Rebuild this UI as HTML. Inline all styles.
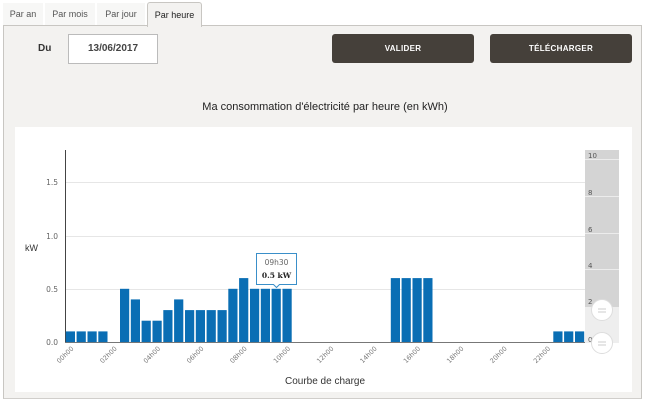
<!DOCTYPE html>
<html><head><meta charset="utf-8"><style>
body{margin:0;width:650px;height:406px;background:#fff;font-family:"Liberation Sans","DejaVu Sans",sans-serif;position:relative;overflow:hidden}
.tab{position:absolute;top:3px;height:22px;font-size:9px;color:#555;line-height:22px;text-align:center;background:#f7f7f6}
.panel{position:absolute;left:3px;top:25px;width:637px;height:372px;background:#f3f2f0;border:1px solid #c8c6c2;border-bottom:1px solid #d0cecb}
.btn{position:absolute;top:34px;width:142px;height:29px;background:#45403a;border-radius:3px;color:#fff;font-size:8px;font-weight:bold;text-align:center;line-height:29px;letter-spacing:.3px}
</style></head><body>
<div class="panel"></div>
<div class="tab" style="left:3px;width:40px">Par an</div>
<div class="tab" style="left:45px;width:50px">Par mois</div>
<div class="tab" style="left:97px;width:48px">Par jour</div>
<div class="tab" style="left:147px;width:53px;top:2px;height:24px;background:#f3f2f0;border:1px solid #c8c6c2;border-bottom:none;border-radius:3px 3px 0 0;color:#222;line-height:24px">Par heure</div>
<div style="position:absolute;left:38px;top:43px;font-size:10px;font-weight:bold;color:#333">Du</div>
<div style="position:absolute;left:68px;top:34px;width:88px;height:28px;background:#fff;border:1px solid #bbb;font-size:10px;font-weight:bold;color:#444;text-align:center;line-height:28px">13/06/2017</div>
<div class="btn" style="left:332px">VALIDER</div>
<div class="btn" style="left:490px">TÉLÉCHARGER</div>
<div style="position:absolute;left:0;width:650px;top:101px;text-align:center;font-size:11px;color:#222">Ma consommation d'électricité par heure (en kWh)</div>
<div style="position:absolute;left:15px;top:127px;width:617px;height:265px;background:#fff"></div>
<svg style="position:absolute;left:0;top:0" width="650" height="406" font-family="DejaVu Sans,Verdana,sans-serif">
<g stroke="#e6e6e6" stroke-width="1">
<line x1="65" y1="182.5" x2="585" y2="182.5"/><line x1="65" y1="236.5" x2="585" y2="236.5"/><line x1="65" y1="289.5" x2="585" y2="289.5"/>
</g>
<line x1="65.5" y1="150" x2="65.5" y2="342" stroke="#444"/>
<line x1="65" y1="342.5" x2="585" y2="342.5" stroke="#777"/>
<g font-size="7.5" fill="#666" text-anchor="end">
<text x="58" y="345">0.0</text><text x="58" y="292">0.5</text><text x="58" y="239">1.0</text><text x="58" y="185">1.5</text>
</g>
<text x="25" y="251" font-size="9" fill="#333" font-family="Liberation Sans,sans-serif">kW</text>
<g fill="#0a6eb4" id="bars"></g>
<g font-size="6.5" fill="#777" text-anchor="end" id="xl"></g>
<rect x="585" y="150" width="34" height="193" fill="#eeeeee"/>
<rect x="585" y="150" width="34" height="157" fill="#d4d4d4"/>
<g stroke="#ececec"><line x1="585" y1="159.5" x2="619" y2="159.5"/><line x1="585" y1="196.5" x2="619" y2="196.5"/><line x1="585" y1="233.5" x2="619" y2="233.5"/><line x1="585" y1="269.5" x2="619" y2="269.5"/></g>
<g font-size="7" fill="#555"><text x="588" y="158">10</text><text x="588" y="195">8</text><text x="588" y="232">6</text><text x="588" y="268">4</text><text x="588" y="304">2</text><text x="588" y="342">0</text></g>
<g fill="#fff" stroke="#ddd"><circle cx="602" cy="310" r="10.5"/><circle cx="602" cy="343" r="10.5"/></g>
<g stroke="#ccc"><line x1="598" y1="309" x2="606" y2="309"/><line x1="598" y1="312" x2="606" y2="312"/><line x1="598" y1="342" x2="606" y2="342"/><line x1="598" y1="345" x2="606" y2="345"/></g>
<path d="M256.5 253.5h40v31h-17l-3 3-3-3h-17z" fill="#fff" stroke="#3a8fc9"/>
<text x="276.5" y="265" font-size="7.5" fill="#666" text-anchor="middle">09h30</text>
<text x="276.5" y="278" font-size="7.5" fill="#222" font-weight="bold" text-anchor="middle" font-family="DejaVu Serif,serif">0.5 kW</text>
<text x="325" y="384" font-size="10" fill="#333" text-anchor="middle" font-family="Liberation Sans,sans-serif">Courbe de charge</text>
</svg>
<script>
var v=[.1,.1,.1,.1,0,.5,.4,.2,.2,.3,.4,.3,.3,.3,.3,.5,.6,.5,.5,.5,.5,0,0,0,0,0,0,0,0,0,.6,.6,.6,.6,0,0,0,0,0,0,0,0,0,0,0,.1,.1,.1];
var w=520/48,s='',l='';
v.forEach(function(x,i){if(x>0){var h=x*106.5;s+='<rect x="'+(65+i*w+0.8).toFixed(1)+'" y="'+(342-h).toFixed(1)+'" width="'+(w-1.6).toFixed(1)+'" height="'+h.toFixed(1)+'"/>';}});
for(var k=0;k<12;k++){var x=65+k*4*w+9;var t=(k*2<10?'0':'')+(k*2)+'h00';l+='<text transform="translate('+x.toFixed(1)+',349) rotate(-45)">'+t+'</text>';}
document.getElementById('bars').innerHTML=s;document.getElementById('xl').innerHTML=l;
</script>
</body></html>
